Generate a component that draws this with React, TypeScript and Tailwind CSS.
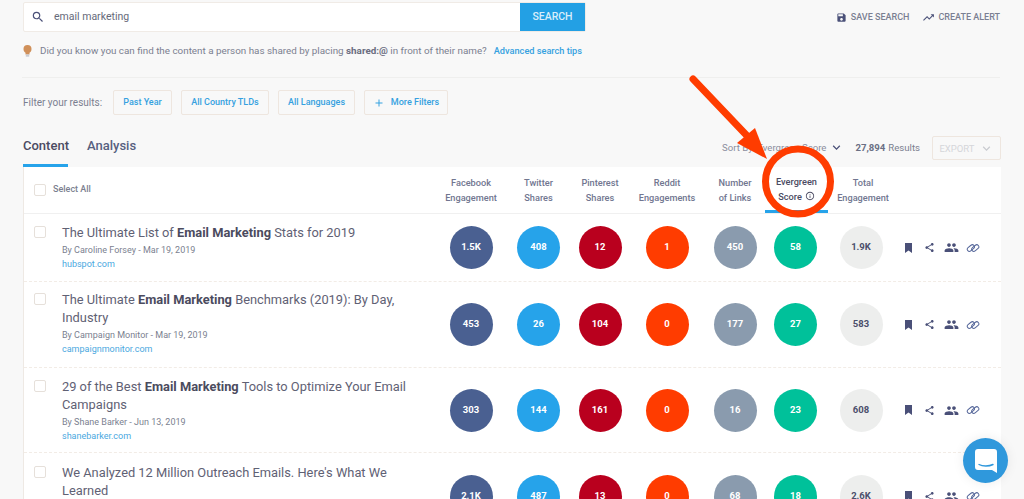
import { MdSearch, MdSave, MdTrendingUp, MdShare, MdPeople, MdAdd, MdExpandMore, MdInfoOutline } from "react-icons/md";

const columns = [
  { w: "w-[68px]", top: "Facebook", bottom: "Engagement", bg: "bg-[#4a6091]", text: "text-white" },
  { w: "w-[67px]", top: "Twitter", bottom: "Shares", bg: "bg-[#26a3ea]", text: "text-white" },
  { w: "w-[56px]", top: "Pinterest", bottom: "Shares", bg: "bg-[#b9001e]", text: "text-white" },
  { w: "w-[78px]", top: "Reddit", bottom: "Engagements", bg: "bg-[#ff3c00]", text: "text-white" },
  { w: "w-[58px]", top: "Number", bottom: "of Links", bg: "bg-[#8a9bae]", text: "text-white" },
  { w: "w-[63px]", top: "Evergreen", bottom: "Score", bg: "bg-[#00c19a]", text: "text-white" },
  { w: "w-[68px]", top: "Total", bottom: "Engagement", bg: "bg-[#edeeed]", text: "text-[#4b4f6b]" },
];

const rows = [
  {
    before: "The Ultimate List of ",
    bold: "Email Marketing",
    after: " Stats for 2019",
    by: "By Caroline Forsey - Mar 19, 2019",
    site: "hubspot.com",
    values: ["1.5K", "408", "12", "1", "450", "58", "1.9K"],
    h: "h-[68px]",
    pt: "pt-[10px]",
  },
  {
    before: "The Ultimate ",
    bold: "Email Marketing",
    after: " Benchmarks (2019): By Day, Industry",
    by: "By Campaign Monitor - Mar 19, 2019",
    site: "campaignmonitor.com",
    values: ["453", "26", "104", "0", "177", "27", "583"],
    h: "h-[86px]",
    pt: "pt-[9px]",
  },
  {
    before: "29 of the Best ",
    bold: "Email Marketing",
    after: " Tools to Optimize Your Email Campaigns",
    by: "By Shane Barker - Jun 13, 2019",
    site: "shanebarker.com",
    values: ["303", "144", "161", "0", "16", "23", "608"],
    h: "h-[85px]",
    pt: "pt-[10px]",
  },
  {
    before: "We Analyzed 12 Million Outreach Emails. Here's What We Learned",
    bold: "",
    after: "",
    by: "By Brian Dean - Mar 12, 2019",
    site: "backlinko.com",
    values: ["2.1K", "487", "13", "0", "68", "18", "2.6K"],
    h: "h-[87px]",
    pt: "pt-[11px]",
  },
];

function FilterButton({ w, children }: { w: string; children: React.ReactNode }) {
  return (
    <button className={`${w} h-[25px] flex items-center justify-center gap-[6px] rounded-[2px] border border-[#eee6df] text-[9px] font-medium text-[#35a1e0]`}>
      {children}
    </button>
  );
}

function Checkbox() {
  return <span className="block w-[12px] h-[12px] shrink-0 rounded-[2px] border border-[#e6e0da] bg-white" />;
}

function BookmarkIcon() {
  return (
    <svg width="7" height="10" viewBox="0 0 7 10" fill="#4a5078">
      <path d="M0 0h7v10L3.5 7.6 0 10z" />
    </svg>
  );
}

function ChainIcon() {
  return (
    <svg width="14" height="12" viewBox="0 0 14 12" fill="none" stroke="#56679a" strokeWidth="1">
      <rect x="0.8" y="4" width="8" height="4.2" rx="2.1" transform="rotate(-40 4.8 6)" />
      <rect x="5.2" y="4" width="8" height="4.2" rx="2.1" transform="rotate(-40 9.2 6)" />
    </svg>
  );
}

export default function App() {
  return (
    <div className="relative w-[1024px] h-[499px] overflow-hidden bg-[#f8f8f8] font-['Roboto',sans-serif] text-[#6f7285]">
      {/* Search */}
      <div className="flex items-center pl-[23px] pr-[24px] pt-[2px]">
        <div className="w-[563px] h-[30px] flex rounded-[2px] border border-[#f0ebe6] bg-white">
          <MdSearch className="ml-[7px] mt-[7px] text-[#4a5078]" size={14} />
          <span className="ml-[9px] leading-[28px] text-[10.5px] text-[#666a7a]">email marketing</span>
          <span className="ml-auto w-[65px] flex items-center justify-center bg-[#23a0e4] text-[10.5px] font-medium text-[#d9eefb]">SEARCH</span>
        </div>
        <div className="ml-auto mt-[1px] flex items-center text-[9px] font-medium text-[#7a7f92]">
          <MdSave className="text-[#4a5078] mr-[4px]" size={11} />
          <span>SAVE SEARCH</span>
          <MdTrendingUp className="ml-[13px] mr-[3px] text-[#4a5078]" size={13} />
          <span>CREATE ALERT</span>
        </div>
      </div>

      {/* Tip */}
      <div className="flex items-center h-[18px] mt-[10px] pl-[23px] text-[9.85px] text-[#7b7f90]">
        <svg width="9" height="12" viewBox="0 0 9 12" className="mr-[8px]">
          <circle cx="4.5" cy="4" r="4" fill="#d0905a" />
          <rect x="2.5" y="7" width="4" height="2.5" fill="#d0905a" />
          <rect x="2.8" y="9.5" width="3.4" height="2.2" fill="#c9ccd4" />
        </svg>
        <span>
          Did you know you can find the content a person has shared by placing <b className="font-bold text-[#6a6d80]">shared:@</b> in front of their name?
        </span>
        <span className="ml-[7px] text-[9.2px] font-medium text-[#35a1e0]">Advanced search tips</span>
      </div>

      <div className="ml-[22px] mr-[24px] mt-[17px] border-t border-[#efefee]" />

      {/* Filters */}
      <div className="flex items-center gap-[9px] pl-[23px] mt-[12px]">
        <span className="w-[81px] text-[10px] whitespace-nowrap text-[#7b7f90]">Filter your results:</span>
        <FilterButton w="w-[59px]">Past Year</FilterButton>
        <FilterButton w="w-[88px]">All Country TLDs</FilterButton>
        <FilterButton w="w-[77px]">All Languages</FilterButton>
        <FilterButton w="w-[84px]">
          <MdAdd size={12} />
          More Filters
        </FilterButton>
      </div>

      {/* Tabs + sort */}
      <div className="flex h-[52px] pl-[23px] pr-[23px] items-end">
        <div className="h-[30px] w-[45px] border-b-[3px] border-[#26a3ea] text-[13px] leading-[18px] font-medium text-[#4b4b62] whitespace-nowrap">Content</div>
        <div className="ml-[19px] h-[30px] text-[13px] leading-[18px] font-medium text-[#56607f]">Analysis</div>
        <div className="ml-auto h-[30px] flex items-start text-[9.6px] leading-[21px]">
          <span className="text-[#8b8e9e]">Sort By: Evergreen Score</span>
          <MdExpandMore size={15} className="mt-[3px] ml-[3px] text-[#4a5078]" />
          <span className="ml-[11px] font-bold text-[#6a6f84]">27,894</span>
          <span className="ml-[3px] text-[#7b7f90]">Results</span>
          <span className="ml-[12px] -mt-[1px] w-[69px] h-[24px] flex items-center justify-center gap-[4px] rounded-[2px] border border-[#eee6df] text-[9.5px] text-[#d5d6da]">
            EXPORT
            <MdExpandMore size={15} className="text-[#c9cbd0]" />
          </span>
        </div>
      </div>

      {/* Table */}
      <div className="ml-[23px] mr-[23px] bg-white border-l border-[#eee9e4]">
        <div className="flex h-[47px] border-b border-[#f0f0f0]">
          <div className="w-[413px] flex items-center pl-[10px]">
            <Checkbox />
            <span className="ml-[7px] text-[9px] font-medium text-[#7b7f90]">Select All</span>
          </div>
          {columns.map((c) => (
            <div
              key={c.top}
              className={`${c.w} flex flex-col justify-center items-center text-[9.2px] leading-[15px] font-medium whitespace-nowrap ${c.top === "Evergreen" ? "border-b-[3px] border-[#26a3ea] text-[#4b4b62] mx-[1px] font-bold" : "text-[#717690]"}`}
            >
              <span>{c.top}</span>
              <span className="flex items-center gap-[3px]">
                {c.bottom}
                {c.top === "Evergreen" && <MdInfoOutline size={10} />}
              </span>
            </div>
          ))}
        </div>
        {rows.map((r) => (
          <div key={r.site} className={`flex ${r.h} border-b border-dashed border-[#f2ece6]`}>
            <div className={`w-[413px] flex pl-[10px] ${r.pt}`}>
              <div className="mt-[2px]">
                <Checkbox />
              </div>
              <div className="ml-[16px] w-[350px]">
                <div className="text-[12.85px] leading-[18px] text-[#5f6174]">
                  {r.before}
                  {r.bold && <b className="font-bold text-[#4b4b5e]">{r.bold}</b>}
                  {r.after}
                </div>
                <div className="mt-[1px] text-[9px] leading-[14px] text-[#7b7f90]">{r.by}</div>
                <div className="text-[9px] leading-[15px] text-[#4aa8e0]">{r.site}</div>
              </div>
            </div>
            {columns.map((c, i) => (
              <div key={c.top} className={`${c.w} flex items-center justify-center`}>
                <span className={`w-[43px] h-[43px] rounded-full flex items-center justify-center text-[9.5px] font-bold ${c.bg} ${c.text}`}>
                  {r.values[i]}
                </span>
              </div>
            ))}
            <div className="flex-1 flex items-center pl-[10px] text-[#4a5078]">
              <BookmarkIcon />
              <MdShare size={11} className="ml-[12px]" />
              <MdPeople size={15} className="ml-[9px]" />
              <span className="ml-[7px]">
                <ChainIcon />
              </span>
            </div>
          </div>
        ))}
      </div>

      {/* Chat launcher */}
      <div className="absolute left-[963px] top-[438px] w-[45px] h-[45px] rounded-full bg-[#2f98dc] flex items-center justify-center shadow-[0_0_12px_rgba(0,0,0,0.08)]">
        <svg width="22" height="24" viewBox="0 0 22 24">
          <path d="M3 0h16a3 3 0 0 1 3 3v21l-5-3H3a3 3 0 0 1-3-3V3a3 3 0 0 1 3-3z" fill="#fff" />
          <path d="M4 15.5c3.5 2 10 2 14 0" fill="none" stroke="#2f98dc" strokeWidth="1.4" strokeLinecap="round" />
        </svg>
      </div>

      {/* Red annotation */}
      <svg className="absolute inset-0 pointer-events-none" width="1024" height="499" viewBox="0 0 1024 499">
        <circle cx="798" cy="181.5" r="32.5" fill="none" stroke="#ff3c00" strokeWidth="7" />
        <line x1="693" y1="79" x2="752" y2="141" stroke="#ff3c00" strokeWidth="7" strokeLinecap="round" />
        <polygon points="767,159 737,143 755,128" fill="#ff3c00" />
      </svg>
    </div>
  );
}
